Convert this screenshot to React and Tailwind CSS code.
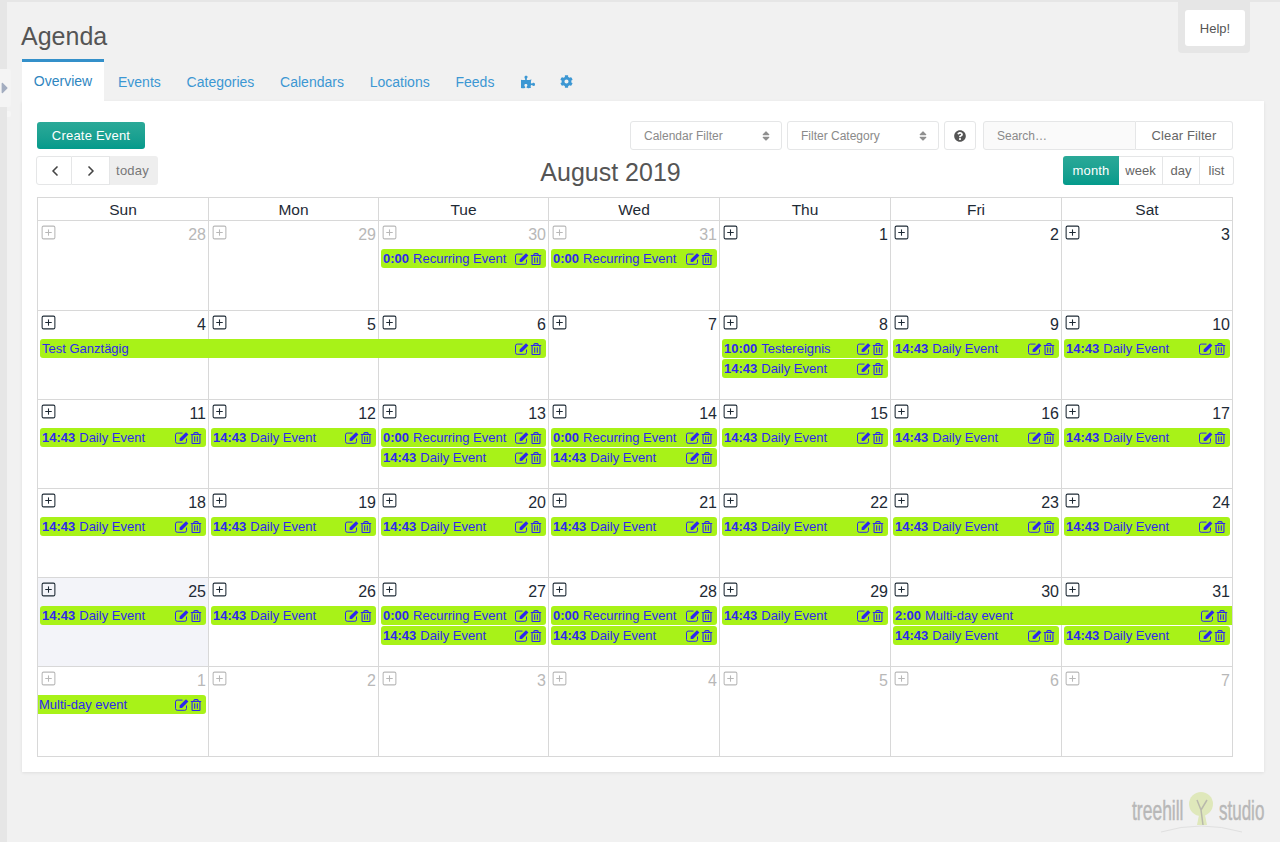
import React from 'react';
import { ChevronLeft, ChevronRight, SquarePlus } from 'lucide-react';
import {
  FaCaretRight,
  FaCog,
  FaPuzzlePiece,
  FaQuestionCircle,
  FaRegTrashAlt,
  FaSort,
} from 'react-icons/fa';

const COL_START = ['col-start-1', 'col-start-2', 'col-start-3', 'col-start-4', 'col-start-5', 'col-start-6', 'col-start-7'];
const COL_SPAN = ['col-span-1', 'col-span-2', 'col-span-3'];
const ROW_START = ['row-start-2', 'row-start-3'];
const COLUMNS = 'grid-cols-[171px_170px_170px_171px_171px_171px_170px]';

const recurring = (col) => ({ col, row: 0, time: '0:00', title: 'Recurring Event' });
const daily = (col, row = 0) => ({ col, row, time: '14:43', title: 'Daily Event' });

const weeks = [
  {
    days: [28, 29, 30, 31, 1, 2, 3],
    muted: [0, 1, 2, 3],
    height: 'h-[90px]',
    events: [recurring(2), recurring(3)],
  },
  {
    days: [4, 5, 6, 7, 8, 9, 10],
    height: 'h-[89px]',
    events: [
      { col: 0, span: 3, row: 0, title: 'Test Ganztägig' },
      { col: 4, row: 0, time: '10:00', title: 'Testereignis' },
      daily(4, 1),
      daily(5),
      daily(6),
    ],
  },
  {
    days: [11, 12, 13, 14, 15, 16, 17],
    height: 'h-[89px]',
    events: [daily(0), daily(1), recurring(2), recurring(3), daily(2, 1), daily(3, 1), daily(4), daily(5), daily(6)],
  },
  {
    days: [18, 19, 20, 21, 22, 23, 24],
    height: 'h-[89px]',
    events: [daily(0), daily(1), daily(2), daily(3), daily(4), daily(5), daily(6)],
  },
  {
    days: [25, 26, 27, 28, 29, 30, 31],
    today: 0,
    height: 'h-[89px]',
    events: [
      daily(0),
      daily(1),
      recurring(2),
      recurring(3),
      daily(2, 1),
      daily(3, 1),
      daily(4),
      { col: 5, span: 2, row: 0, time: '2:00', title: 'Multi-day event', openEnd: true },
      daily(5, 1),
      daily(6, 1),
    ],
  },
  {
    days: [1, 2, 3, 4, 5, 6, 7],
    muted: [0, 1, 2, 3, 4, 5, 6],
    height: 'h-[90px]',
    events: [{ col: 0, row: 0, title: 'Multi-day event', openStart: true }],
  },
];

// thin frame with a solid pencil, the package icons are too heavy or too hollow
const EditIcon = () => (
  <svg viewBox="0 0 14 13" className="ml-1 h-[13px] w-[14px] shrink-0">
    <path d="M11.5 7.5v3a1.8 1.8 0 0 1-1.8 1.8H2.3a1.8 1.8 0 0 1-1.8-1.8V3.9a1.8 1.8 0 0 1 1.8-1.8h5.2" fill="none" stroke="currentColor" strokeWidth="1" />
    <path d="M4.6 7.6 L11 1.2 L13.4 3.6 L7 10 L4.6 10 Z" fill="currentColor" />
  </svg>
);

const Event = ({ event }) => {
  const span = event.span || 1;
  const lastCol = event.col + span === 7;
  return (
    <div
      className={`${COL_START[event.col]} ${COL_SPAN[span - 1]} ${ROW_START[event.row]}
        z-10 flex h-[19px] items-center bg-[#a8f218] text-[13px] leading-[19px] text-[#2e28ee] mb-px
        ${event.openStart ? 'ml-0 pl-px rounded-r-[3px]' : 'ml-[2px] pl-[2px] rounded-l-[3px]'}
        ${event.openEnd ? 'mr-0 pr-[4px]' : `${lastCol ? 'mr-[2px]' : 'mr-[3px]'} pr-[4px] rounded-r-[3px]`}`}
    >
      <span className="flex-1 truncate">
        {event.time && <b className="mr-1 font-bold">{event.time}</b>}
        {event.title}
      </span>
      <EditIcon />
      <FaRegTrashAlt className="size-[12px] shrink-0 ml-px" />
    </div>
  );
};

const Week = ({ week }) => (
  <div className={`grid ${COLUMNS} ${week.height} grid-rows-[28px_20px_20px_1fr] border-b border-[#d8d8d8]`}>
    {week.days.map((day, i) => {
      const muted = week.muted && week.muted.includes(i);
      return (
        <div
          key={i}
          className={`${COL_START[i]} row-start-1 row-end-5 flex items-start justify-between pl-[1.5px] pr-[2px] pt-[3px]
            ${i < 6 ? 'border-r border-[#d8d8d8]' : ''}
            ${week.today === i ? 'bg-[#f3f4f9]' : ''}
            ${muted ? 'text-[#b8b8b8]' : 'text-[#1e2a35]'}`}
        >
          <SquarePlus className="size-[17px]" strokeWidth={1.5} />
          <span className="mt-px text-[16px] leading-[19px]">{day}</span>
        </div>
      );
    })}
    {week.events.map((event, i) => (
      <Event key={i} event={event} />
    ))}
  </div>
);

const Logo = () => (
  <svg width="136" height="44" viewBox="0 0 136 44" className="shrink-0">
    <path d="M31 42 Q71 30 112 42" fill="none" stroke="#e0e0e0" strokeWidth="1" />
    <circle cx="71" cy="14" r="12" fill="#dfe8bb" />
    <path d="M67 35 L77 35 L74 20 L70 20 Z" fill="#dfe8bb" />
    <path d="M73 35 L71 20 L67 10 M71 20 L77 10" fill="none" stroke="#b9b9ac" strokeWidth="1.5" />
    <text transform="translate(2 29.5) scale(1 1.6)" fontFamily="'Liberation Sans', sans-serif" fontSize="17.5" fill="#b8b8b8" stroke="#b8b8b8" strokeWidth="0.3">
      treehill
    </text>
    <text transform="translate(89 29.5) scale(1 1.6)" fontFamily="'Liberation Sans', sans-serif" fontSize="17" fill="#b8b8b8" stroke="#b8b8b8" strokeWidth="0.3">
      studio
    </text>
  </svg>
);

const FilterSelect = ({ label }) => (
  <div className="flex h-[29px] w-[152px] items-center justify-between rounded-[3px] border border-[#e5e6e7] pl-[13px] pr-[9px] text-[12px] text-[#8a8a8a]">
    {label}
    <FaSort className="size-[12px] text-[#8f8f8f]" />
  </div>
);

export default function App() {
  const tabs = ['Events', 'Categories', 'Calendars', 'Locations', 'Feeds'];

  return (
    <div className="h-[842px] w-[1280px] overflow-hidden bg-[#e6e6e6] pt-[2px] pl-[7px] font-['Liberation_Sans',sans-serif]">
      <div className="relative h-[840px] bg-[#f1f1f1] pl-[15px] pr-[16px]">
        {/* Sidebar toggle */}
        <div className="absolute -left-[7px] top-[67px] flex h-[38px] w-[11px] items-center rounded-r-[2px] bg-[#f4f4f4]">
          <FaCaretRight className="size-[18px] shrink-0 -ml-[4px] text-[#a3adc0]" />
        </div>
        <div className="absolute left-0 top-[109px] h-[6px] w-[4px] rounded-r-[2px] bg-[#f6f6f6]" />

        {/* Help */}
        <div className="absolute right-[30px] top-0 rounded-b-[4px] bg-[#e6e6e6] pb-[7px] pl-[7px] pr-[5px] pt-[8px]">
          <div className="flex h-[36px] w-[60px] items-center justify-center rounded-[3px] bg-white pt-px text-[13px] text-[#555555]">
            Help!
          </div>
        </div>

        <h1 className="-ml-px h-[57px] pt-[19px] text-[25px] leading-[30px] text-[#555555]">Agenda</h1>

        {/* Tabs */}
        <div className="flex h-[42px] items-stretch text-[14px] text-[#3c97d3]">
          <div className="flex w-[82px] items-center justify-center border-t-[3px] border-[#3490ca] bg-white text-[#2f86bf]">
            Overview
          </div>
          <div className="flex items-center gap-[25.8px] pl-[14px] pt-[4px]">
            {tabs.map((tab) => (
              <span key={tab}>{tab}</span>
            ))}
            <FaPuzzlePiece className="size-[14px] -mt-px ml-px" />
            <FaCog className="size-[13px] -mt-px -ml-px" />
          </div>
        </div>

        {/* Panel */}
        <div className="h-[671px] bg-white px-[15px] pt-[21px] shadow-[0_1px_3px_rgba(0,0,0,0.08)]">
          <div className="flex h-[29px] items-start justify-between pr-[16px]">
            <button className="h-[27px] w-[108px] rounded-[3px] bg-gradient-to-b from-[#2aa998] to-[#039a8b] text-[13px] tracking-[0.2px] text-white">
              Create Event
            </button>
            <div className="-mt-px flex gap-[5px]">
              <FilterSelect label="Calendar Filter" />
              <FilterSelect label="Filter Category" />
              <div className="flex h-[29px] w-[32px] items-center justify-center rounded-[3px] border border-[#e5e6e7] text-[#555555]">
                <FaQuestionCircle className="size-[12px]" />
              </div>
              <div className="ml-[2px] flex h-[29px]">
                <div className="flex w-[153px] items-center rounded-l-[3px] border border-[#e5e6e7] bg-[#fafafa] pl-[13px] text-[12px] text-[#8a8a8a]">
                  Search…
                </div>
                <div className="flex w-[97px] items-center justify-center rounded-r-[3px] border border-l-0 border-[#e5e6e7] text-[13px] tracking-[0.1px] text-[#666666]">
                  Clear Filter
                </div>
              </div>
            </div>
          </div>

          {/* Toolbar */}
          <div className="-ml-px mt-[5px] flex h-[29px] items-center justify-between pr-[15px]">
            <div className="flex h-[29px] w-[122px] text-[13px] text-[#777777]">
              <div className="flex w-[36px] items-center justify-center rounded-l-[3px] border border-[#e5e6e7] pl-px">
                <ChevronLeft className="size-[16px] text-[#444444]" strokeWidth={2.5} />
              </div>
              <div className="flex w-[38px] items-center justify-center border-y border-r border-[#e5e6e7] pl-px">
                <ChevronRight className="size-[16px] text-[#444444]" strokeWidth={2.5} />
              </div>
              <div className="flex flex-1 items-center justify-center rounded-r-[3px] bg-[#eeeeee] pr-[3px] tracking-[0.2px]">today</div>
            </div>
            <h2 className="mt-[3px] text-[25px] leading-[29px] text-[#555555]">August 2019</h2>
            <div className="flex h-[29px] text-[13px] text-[#666666]">
              <div className="flex w-[56px] items-center justify-center rounded-l-[3px] bg-gradient-to-b from-[#2aa998] to-[#039a8b] tracking-[0.2px] text-white">
                month
              </div>
              <div className="flex w-[44px] items-center justify-center border-y border-r border-[#e5e6e7]">week</div>
              <div className="flex w-[37px] items-center justify-center border-y border-r border-[#e5e6e7]">day</div>
              <div className="flex w-[34px] items-center justify-center rounded-r-[3px] border-y border-r border-[#e5e6e7]">list</div>
            </div>
          </div>

          {/* Calendar */}
          <div className="mt-[12px] w-[1196px] border-x border-t border-[#d8d8d8]">
            <div className={`grid ${COLUMNS} h-[23px] border-b border-[#d8d8d8] text-[15.5px] leading-[24px] text-[#1e2a35]`}>
              {['Sun', 'Mon', 'Tue', 'Wed', 'Thu', 'Fri', 'Sat'].map((day, i) => (
                <div key={day} className={`text-center ${i < 6 ? 'border-r border-[#d8d8d8]' : ''}`}>
                  {day}
                </div>
              ))}
            </div>
            {weeks.map((week) => (
              <Week key={week.days[0]} week={week} />
            ))}
          </div>
        </div>

        {/* Logo */}
        <div className="absolute bottom-[8px] right-[14px] flex">
          <Logo />
        </div>
      </div>
    </div>
  );
}
